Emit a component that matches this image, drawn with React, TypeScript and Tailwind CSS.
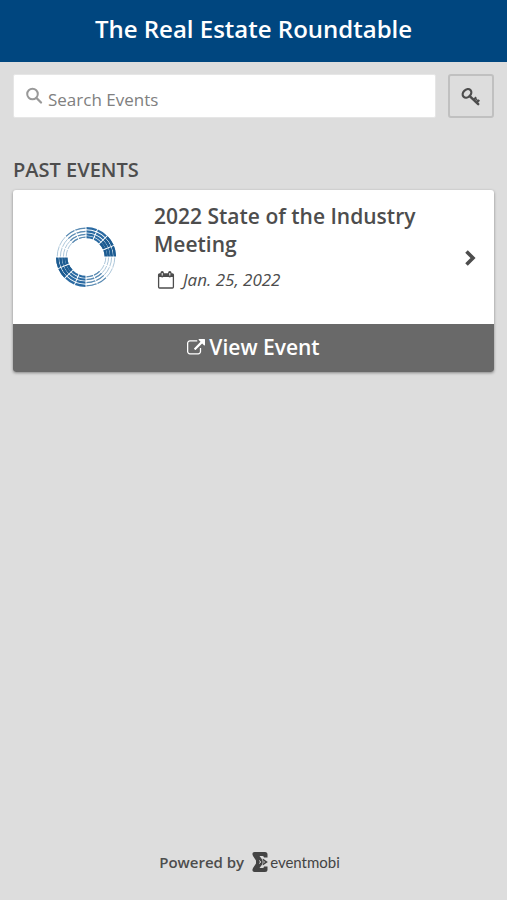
import React from 'react';

interface EventInfo {
  id: number;
  name: string;
  date: string;
}

const pastEvents: EventInfo[] = [
  { id: 1, name: '2022 State of the Industry Meeting', date: 'Jan. 25, 2022' },
];

const SearchIcon = () => (
  <svg viewBox="0 0 18 18" className="w-[18px] h-[18px] shrink-0" fill="none" stroke="#999" aria-hidden="true">
    <circle cx="6.5" cy="7" r="5.3" strokeWidth="2" />
    <path d="M10.500 11l4.500 4.500" strokeWidth="2.3" strokeLinecap="round" />
  </svg>
);

const KeyIcon = () => (
  <svg viewBox="0 0 20 20" className="w-5 h-5" fill="none" stroke="currentColor" aria-hidden="true">
    <ellipse cx="6" cy="7.4" rx="4.8" ry="3.7" transform="rotate(-45 6 7.400)" strokeWidth="2.3" />
    <path d="m9 10.400 8.200 7.800" strokeWidth="2.5" strokeLinecap="round" />
    <path d="m12.500 14 2.700-2.700M15.600 16.700l2.700-2.700" strokeWidth="2" />
    <path d="m14.200 12.300 3 3" strokeWidth="1.4" />
  </svg>
);

const CalendarIcon = () => (
  <svg viewBox="0 0 18 18" className="w-[18px] h-[18px] shrink-0" fill="none" stroke="currentColor" aria-hidden="true">
    <rect x="1.6" y="3" width="14.8" height="14" rx="1" strokeWidth="1.3" />
    <path d="M1.500 4.600h15" strokeWidth="3" />
    <path d="M5.200 1.800v3M12.800 1.800v3" strokeWidth="3.4" strokeLinecap="round" />
    <path d="M5.200 2v2.600M12.800 2v2.600" stroke="#fff" strokeWidth="1" />
  </svg>
);

const ExternalLinkIcon = () => (
  <svg viewBox="0 0 1792 1792" className="w-[18px] h-[18px] shrink-0" fill="currentColor" aria-hidden="true">
    <path d="M1408 928v320q0 119-84.5 203.5t-203.5 84.5h-832q-119 0-203.5-84.5t-84.5-203.5v-832q0-119 84.5-203.5t203.5-84.5h704q14 0 23 9t9 23v64q0 14-9 23t-23 9h-704q-66 0-113 47t-47 113v832q0 66 47 113t113 47h832q66 0 113-47t47-113v-320q0-14 9-23t23-9h64q14 0 23 9t9 23zm384-864v512q0 26-19 45t-45 19-45-19l-176-176-652 652q-10 10-23 10t-23-10l-114-114q-10-10-10-23t10-23l652-652-176-176q-19-19-19-45t19-45 45-19h512q26 0 45 19t19 45z" />
  </svg>
);

const ChevronIcon = () => (
  <svg viewBox="0 0 12 18" className="w-3 h-[18px] shrink-0" fill="none" stroke="currentColor" aria-hidden="true">
    <path d="m2.500 3.500 6.500 6.500-6.500 6.500" strokeWidth="3.6" />
  </svg>
);

const rings = [28.8, 25.6, 22.6, 19.8];
const spokes = [0, 22.5, 45, 67.5, 90, 112.5, 135, 157.5];

// four rings; the upper right and lower left quarters are dark, heaviest near the horizontal
const RoundtableLogo = () => (
  <svg viewBox="-31 -31 62 62" className="w-[62px] h-[62px]" fill="none" role="img" aria-label="The Real Estate Roundtable">
    {rings.map((r) => (
      <g key={r}>
        <circle r={r} stroke="#a3bfd5" strokeWidth="0.9" />
        <path
          d={`M${-r * 0.707} ${-r * 0.707}A${r} ${r} 0 0 1 0 ${-r}M${r * 0.707} ${r * 0.707}A${r} ${r} 0 0 1 0 ${r}`}
          stroke="#5b8bb3"
          strokeWidth="1.2"
        />
        <path
          d={`M0 ${-r}A${r} ${r} 0 0 1 ${r} 0M0 ${r}A${r} ${r} 0 0 1 ${-r} 0`}
          stroke="#2a6aa2"
          strokeWidth="2.2"
        />
        <path
          d={`M${r * 0.707} ${-r * 0.707}A${r} ${r} 0 0 1 ${r} 0M${-r * 0.707} ${r * 0.707}A${r} ${r} 0 0 1 ${-r} 0`}
          stroke="#1c5b91"
          strokeWidth="2.5"
        />
      </g>
    ))}
    {spokes.map((a) => (
      <path key={a} d="M-31 0H-17M17 0H31" stroke="#fff" strokeWidth="1" transform={`rotate(${a})`} />
    ))}
  </svg>
);

const EventMobiMark = () => (
  <svg viewBox="0 0 16 20" className="w-4 h-5" aria-hidden="true">
    <path
      d="M2.500 0H13q2.500 0 2.500 2.500V5.500h-3.500q0-1.500-1.500-1.500H7.500l3 4v4l-3 4h3q1.500 0 1.500-1.500h3.500v3q0 2.500-2.500 2.500H2.500Q0 20 .5 17.500l.5-1.500 3-4.500v-3L1 4 .5 2.500Q0 0 2.500 0z"
      fill="#444"
    />
    <path d="m10.800 6.500 5 3.500-5 3.500z" fill="#444" />
    <path d="M7 8.500 9 10l-2 1.500M11 8.500l1.500 1.500-1.500 1.500" fill="none" stroke="#ddd" strokeWidth="0.9" />
  </svg>
);

const EventCard = ({ event }: { event: EventInfo }) => (
  <article className="overflow-hidden rounded-[3px] bg-white shadow-[0_1px_3px_rgba(0,0,0,0.4)]">
    <div className="flex h-[134px] items-center pr-[18px]">
      <div className="flex w-[141px] shrink-0 justify-center pl-1">
        <RoundtableLogo />
      </div>
      <div className="flex-1 self-start pt-3">
        <h3 className="text-[21px] leading-7 font-semibold">{event.name}</h3>
        <p className="mt-[10px] flex items-center gap-2 pl-[3px] text-[17px] leading-6 italic">
          <CalendarIcon />
          <time dateTime="2022-01-25">{event.date}</time>
        </p>
      </div>
      <ChevronIcon />
    </div>
    <button type="button" className="flex h-12 w-full items-center justify-center gap-1 bg-[#696969] text-[21px] font-semibold text-white">
      <ExternalLinkIcon />
      View Event
    </button>
  </article>
);

export default function App() {
  return (
    <div className="flex min-h-screen flex-col bg-[#ddd] font-['Open_Sans',sans-serif] text-[#4d4d4d]">
      <header className="flex h-[62px] items-center justify-center bg-[#00467f] pb-1 text-white">
        <h1 className="text-2xl font-semibold">The Real Estate Roundtable</h1>
      </header>

      <main className="flex-1 px-[13px] pt-3">
        <form className="flex gap-3" onSubmit={(e) => e.preventDefault()}>
          <label className="flex h-11 flex-1 items-center gap-1 rounded-[2px] border border-[#e6e6e6] bg-white px-3">
            <SearchIcon />
            <input
              type="search"
              aria-label="Search Events"
              placeholder="Search Events"
              className="w-full pt-2 text-[17px] outline-none placeholder:text-[#808080]"
            />
          </label>
          <button
            type="button"
            aria-label="Enter access code"
            className="flex h-11 w-[46px] items-center justify-center rounded-[3px] border-2 border-[#c0c0c0]"
          >
            <KeyIcon />
          </button>
        </form>

        <section className="mt-9">
          <h2 className="mb-1 text-xl leading-8 font-semibold">PAST EVENTS</h2>
          {pastEvents.map((event) => (
            <EventCard key={event.id} event={event} />
          ))}
        </section>
      </main>

      <footer className="flex items-center justify-center gap-2 pr-2 pb-[26px] text-[15px] leading-6 font-semibold">
        <span>Powered by</span>
        <a href="#eventmobi" className="flex items-center gap-[2px] text-[#444]">
          <EventMobiMark />
          <span className="font-[Lato,sans-serif] text-[15px] leading-5 font-normal">eventmobi</span>
        </a>
      </footer>
    </div>
  );
}
